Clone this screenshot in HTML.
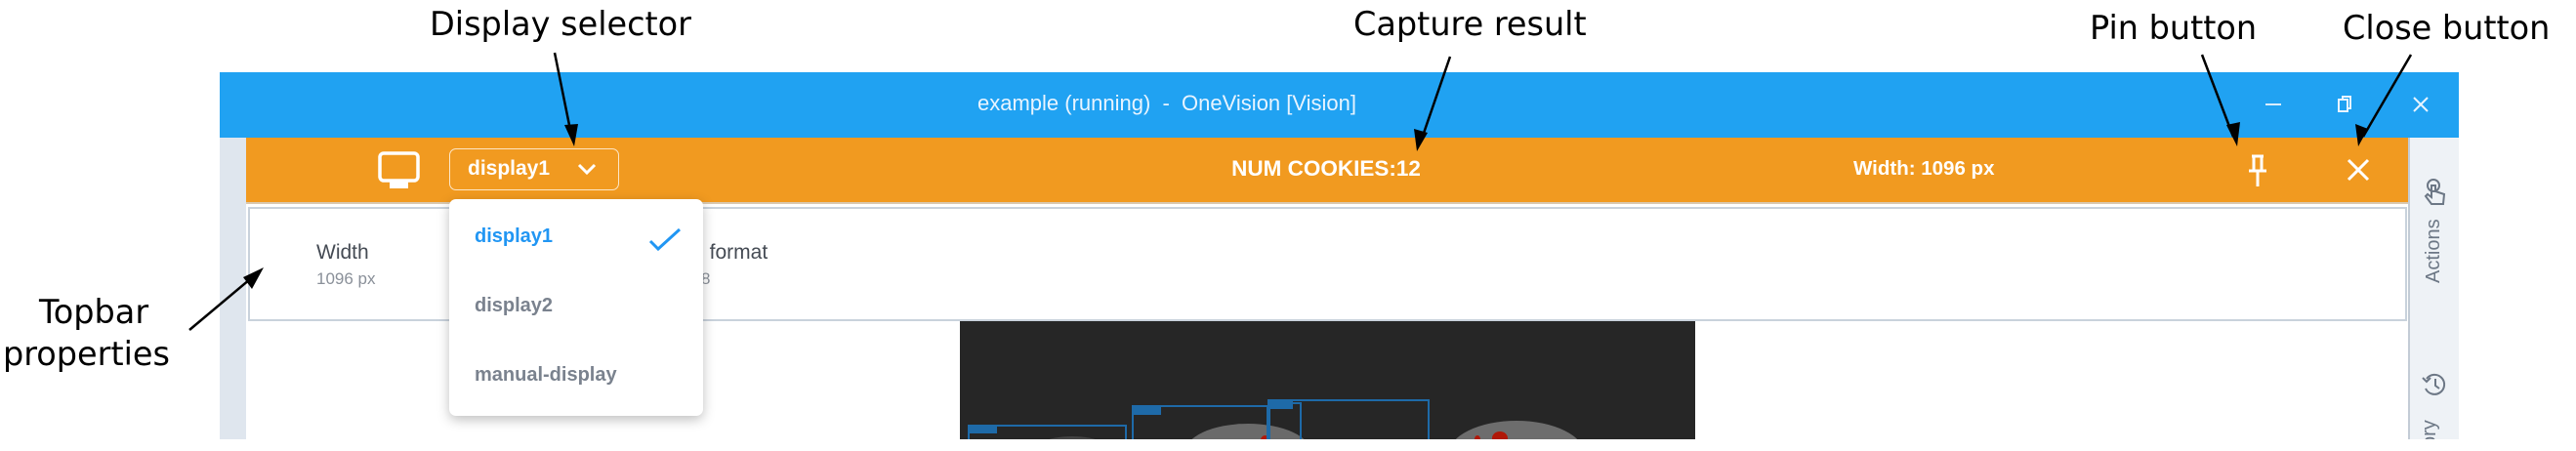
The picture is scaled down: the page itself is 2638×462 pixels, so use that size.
<!DOCTYPE html>
<html><head><meta charset="utf-8"><style>
*{margin:0;padding:0;box-sizing:border-box}
html,body{width:2638px;height:462px;overflow:hidden}
body{background:#fff;position:relative;font-family:"Liberation Sans",sans-serif}
.a{position:absolute}
.ann{position:absolute;font-family:"DejaVu Sans",sans-serif;font-size:33.5px;color:#000;white-space:nowrap;line-height:1}
</style></head><body>
<!-- blue title bar -->
<div class="a" style="left:225px;top:74px;width:2293px;height:67px;background:#20a2f2"></div>
<div class="a" style="left:935px;top:93px;width:520px;text-align:center;color:#e8f4ff;font-size:22px;white-space:nowrap">example (running)&nbsp;&nbsp;-&nbsp;&nbsp;OneVision [Vision]</div>
<div class="a" style="left:2320px;top:106px;width:16px;height:2px;background:#d8ecfc"></div>
<svg class="a" style="left:2393px;top:97px" width="18" height="20"><rect x="2" y="5" width="9" height="12" fill="none" stroke="#e8f4ff" stroke-width="2"/><path d="M6 5V2h8v12h-3" fill="none" stroke="#e8f4ff" stroke-width="2"/></svg>
<svg class="a" style="left:2470px;top:98px" width="18" height="18"><path d="M2 2L16 16M16 2L2 16" stroke="#e8f4ff" stroke-width="2"/></svg>
<!-- left strip -->
<div class="a" style="left:225px;top:141px;width:27px;height:309px;background:#dfe6ee"></div>
<!-- orange bar -->
<div class="a" style="left:252px;top:141px;width:2214px;height:68px;background:#f19a20;border-bottom:2px solid #d9c8b0"></div>
<!-- right sidebar -->
<div class="a" style="left:2466px;top:141px;width:52px;height:309px;background:#eef2f6;border-left:2px solid #c3ccd6;overflow:hidden">
<div class="a" style="left:-2px;top:111px;width:52px;height:24px;transform:rotate(-90deg);text-align:center;color:#6c7785;font-size:20px;line-height:24px">Actions</div>
<div class="a" style="left:10px;top:282px;width:30px;height:40px;transform:rotate(-90deg);color:#6c7785;font-size:20px;line-height:30px;text-align:left;padding-left:0">ory</div>
</div>
<svg class="a" style="left:2480px;top:182px" width="26" height="30" viewBox="0 0 26 30"><circle cx="12" cy="8" r="6" fill="none" stroke="#6c7785" stroke-width="2"/><path d="M10 8v12l-4-3-2 2 6 8h12l1-10-9-3V8z" fill="none" stroke="#6c7785" stroke-width="2"/></svg>
<svg class="a" style="left:2479px;top:380px" width="28" height="28" viewBox="0 0 28 28"><path d="M6 8A10 10 0 1 1 5 18" fill="none" stroke="#6c7785" stroke-width="2"/><path d="M2 7l4 4 4-4" fill="none" stroke="#6c7785" stroke-width="2"/><path d="M15 8v7l4 3" fill="none" stroke="#6c7785" stroke-width="2"/></svg>
<!-- orange bar contents -->
<svg class="a" style="left:387px;top:155px" width="43" height="39" viewBox="0 0 43 39"><rect x="2" y="2" width="39" height="28" rx="4" fill="none" stroke="#fff" stroke-width="3.5"/><rect x="12" y="30" width="19" height="8" fill="#fff"/></svg>
<div class="a" style="left:460px;top:152px;width:174px;height:43px;border:1.5px solid #fde6c6;border-radius:7px"></div>
<div class="a" style="left:479px;top:160px;color:#fff;font-weight:bold;font-size:21px;line-height:26px">display1</div>
<svg class="a" style="left:590px;top:166px" width="22" height="14"><path d="M3 3l8 8 8-8" fill="none" stroke="#fff" stroke-width="3"/></svg>
<div class="a" style="left:1208px;top:160px;width:300px;text-align:center;color:#fff;font-weight:bold;font-size:22.5px;line-height:26px">NUM COOKIES:12</div>
<div class="a" style="left:1898px;top:160px;color:#fff;font-weight:bold;font-size:20.5px;line-height:26px">Width: 1096 px</div>
<svg class="a" style="left:2299px;top:157px" width="26" height="36" viewBox="0 0 26 36"><path d="M7 3h12M9 3v14M17 3v14M4 18h18M13 18v16" fill="none" stroke="#fff" stroke-width="3"/></svg>
<svg class="a" style="left:2403px;top:162px" width="24" height="24"><path d="M2 2L22 22M22 2L2 22" stroke="#fff" stroke-width="3"/></svg>
<!-- properties panel -->
<div class="a" style="left:254px;top:212px;width:2211px;height:117px;background:#fff;border:2px solid #c9d2dc"></div>
<div class="a" style="left:324px;top:247px;color:#454b54;font-size:21px">Width</div>
<div class="a" style="left:324px;top:276px;color:#8a9099;font-size:17px">1096 px</div>
<div class="a" style="left:715px;top:247px;color:#454b54;font-size:21px">&nbsp;&nbsp;format</div>
<div class="a" style="left:718px;top:276px;color:#8a9099;font-size:17px">8</div>
<!-- image -->
<div class="a" style="left:983px;top:329px;width:753px;height:121px;background:#262626;overflow:hidden">
<div class="a" style="left:230px;top:105px;width:130px;height:60px;border-radius:50%;background:#6a6a6a"></div>
<div class="a" style="left:500px;top:102px;width:140px;height:70px;border-radius:50%;background:#6d6d6d"></div>
<div class="a" style="left:70px;top:118px;width:90px;height:40px;border-radius:50%;background:#444"></div>
<div class="a" style="left:545px;top:113px;width:16px;height:14px;border-radius:50%;background:#b01808"></div>
<div class="a" style="left:527px;top:117px;width:6px;height:8px;border-radius:50%;background:#b01808"></div>
<div class="a" style="left:308px;top:117px;width:9px;height:10px;border-radius:50%;background:#b01808"></div>
<div class="a" style="left:8px;top:106px;width:163px;height:30px;border:2px solid #1e6aa8"></div>
<div class="a" style="left:8px;top:106px;width:30px;height:9px;background:#1e6aa8"></div>
<div class="a" style="left:176px;top:86px;width:140px;height:50px;border:2px solid #1e6aa8"></div>
<div class="a" style="left:176px;top:86px;width:30px;height:10px;background:#1e6aa8"></div>
<div class="a" style="left:316px;top:83px;width:34px;height:60px;border:2px solid #1e6aa8"></div>
<div class="a" style="left:315px;top:80px;width:166px;height:60px;border:2px solid #1e6aa8"></div>
<div class="a" style="left:315px;top:80px;width:26px;height:10px;background:#1e6aa8"></div>
</div>
<!-- dropdown menu -->
<div class="a" style="left:460px;top:204px;width:260px;height:222px;background:#fff;border-radius:7px;box-shadow:0 4px 12px rgba(0,0,0,.25)"></div>
<div class="a" style="left:486px;top:231px;color:#2196f3;font-weight:bold;font-size:20px">display1</div>
<svg class="a" style="left:663px;top:232px" width="36" height="26"><path d="M3 15l8 8L33 3" fill="none" stroke="#2196f3" stroke-width="3"/></svg>
<div class="a" style="left:486px;top:302px;color:#7a828e;font-weight:bold;font-size:20px">display2</div>
<div class="a" style="left:486px;top:373px;color:#7a828e;font-weight:bold;font-size:20px">manual-display</div>
<!-- annotations -->
<div class="ann" style="left:440px;top:8px">Display selector</div>
<div class="ann" style="left:1386px;top:8px">Capture result</div>
<div class="ann" style="left:2140px;top:12px">Pin button</div>
<div class="ann" style="left:2399px;top:12px">Close button</div>
<div class="ann" style="left:40px;top:303px">Topbar</div>
<div class="ann" style="left:3px;top:346px">properties</div>
<svg class="a" style="left:0;top:0" width="2638" height="462">
<g stroke="#000" stroke-width="2.5" fill="none">
<path d="M568 54L585 138"/><path d="M1485 58L1455 145"/><path d="M2255 56L2287 140"/><path d="M2469 56L2420 140"/><path d="M194 338L262 281"/>
</g>
<g fill="#000">
<path d="M588 150L578 128L592 127z"/><path d="M1451 155L1448 132L1462 136z"/><path d="M2291 150L2280 128L2294 125z"/><path d="M2415 150L2412 127L2425 132z"/><path d="M270 274L258 296L249 284z"/>
</g>
</svg>
</body></html>
